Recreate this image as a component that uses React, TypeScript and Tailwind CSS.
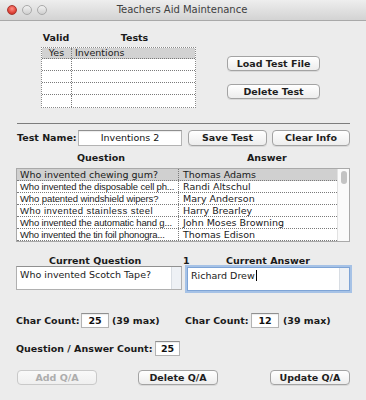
import React from "react";

const btn =
  "flex items-center justify-center rounded-[4px] border border-[#a3a3a3] bg-gradient-to-b from-[#ffffff] to-[#ededed] shadow-[0_1px_0_rgba(0,0,0,0.08)] text-[9.5px] font-bold text-[#1e1e1e] leading-none";
const btnDisabled =
  "flex items-center justify-center rounded-[4px] border border-[#c9c9c9] bg-gradient-to-b from-[#f9f9f9] to-[#efefef] text-[9.5px] font-bold text-[#adadad] leading-none";
const field =
  "flex items-center justify-center bg-white border border-[#b3b3b3] border-t-[#8f8f8f] shadow-[inset_0_1px_1px_rgba(0,0,0,0.08)] text-[9.5px] text-[#111] leading-none";

const questions: { q: string; a: string; cls: string }[] = [
  { q: "Who invented chewing gum?", a: "Thomas Adams", cls: "font-['DejaVu_Sans',sans-serif] text-[9.5px]" },
  { q: "Who invented the disposable cell ph...", a: "Randi Altschul", cls: "font-['Liberation_Sans',sans-serif] text-[9.5px] tracking-[-0.15px]" },
  { q: "Who patented windshield wipers?", a: "Mary Anderson", cls: "font-['Liberation_Sans',sans-serif] text-[9.5px] tracking-[-0.1px]" },
  { q: "Who invented stainless steel", a: "Harry Brearley", cls: "font-['Liberation_Sans',sans-serif] text-[9.5px] tracking-[0.45px]" },
  { q: "Who invented the automatic hand g...", a: "John Moses Browning", cls: "font-['Liberation_Sans',sans-serif] text-[9.5px] tracking-[-0.15px]" },
  { q: "Who invented the tin foil phonogra...", a: "Thomas Edison", cls: "font-['Liberation_Sans',sans-serif] text-[9.5px] tracking-[-0.2px]" },
];

export default function App() {
  return (
    <div className="w-[366px] h-[400px] overflow-hidden bg-[#ececec] font-['DejaVu_Sans',sans-serif] text-[#1a1a1a]">
      {/* Title bar */}
      <div className="relative h-[21px] flex items-center bg-gradient-to-b from-[#eeeeee] to-[#d3d3d3] border-b border-[#a9a9a9]">
        <div className="flex items-center gap-[5px] pl-[7px]">
          <div className="w-[10px] h-[10px] rounded-full bg-[radial-gradient(circle_at_50%_35%,#ff8f86,#e0443a_60%,#b22a22)] border border-[#a8372f]" />
          <div className="w-[10px] h-[10px] rounded-full bg-gradient-to-b from-[#f2f2f2] to-[#cfcfcf] border border-[#a9a9a9]" />
          <div className="w-[10px] h-[10px] rounded-full bg-gradient-to-b from-[#f2f2f2] to-[#cfcfcf] border border-[#a9a9a9]" />
        </div>
        <div className="absolute inset-0 flex items-center justify-center text-[10px] text-[#404040] leading-none pr-[2px]">
          Teachers Aid Maintenance
        </div>
      </div>

      {/* Tests section */}
      <div className="mt-[11px] flex pl-[41px]">
        <div className="flex flex-col w-[155px]">
          <div className="flex h-[12px] items-center text-[9.5px] font-bold leading-none">
            <div className="w-[30px] text-center">Valid</div>
            <div className="flex-1 text-center pl-[2px]">Tests</div>
          </div>
          <div className="mt-[3px] border border-dotted border-[#8a8a8a] bg-white">
            <div className="flex h-[11px] bg-[#d2d2d2] border-b border-dotted border-[#7a7a7a] text-[9.5px] leading-none items-center">
              <div className="w-[30px] h-full flex items-center justify-center border-r border-dotted border-[#7a7a7a]">Yes</div>
              <div className="flex-1 pl-[3px]">Inventions</div>
            </div>
            {[0, 1, 2, 3].map((i) => (
              <div key={i} className={`flex h-[12px] ${i < 3 ? "border-b border-dotted border-[#7a7a7a]" : ""}`}>
                <div className="w-[30px] h-full border-r border-dotted border-[#7a7a7a]" />
                <div className="flex-1" />
              </div>
            ))}
          </div>
        </div>
        <div className="ml-[31px] flex flex-col pt-[24px] gap-[13px]">
          <div className={`${btn} w-[93px] h-[15px]`}>Load Test File</div>
          <div className={`${btn} w-[93px] h-[15px]`}>Delete Test</div>
        </div>
      </div>

      {/* Separator */}
      <div className="mt-[15px] ml-[17px] w-[333px] h-[1px] bg-[#7d7d7d]" />

      {/* Test name row */}
      <div className="mt-[6px] flex items-center h-[16px] pl-[17px]">
        <div className="w-[61px] text-[9.5px] font-bold leading-none">Test Name:</div>
        <div className={`${field} w-[104px] h-[16px]`}>Inventions 2</div>
        <div className={`${btn} ml-[6px] w-[79px] h-[16px]`}>Save Test</div>
        <div className={`${btn} ml-[5px] w-[78px] h-[16px]`}>Clear Info</div>
      </div>

      {/* Question / Answer headers */}
      <div className="mt-[6px] flex h-[12px] items-center text-[9.5px] font-bold leading-none">
        <div className="ml-[77px] w-[170px]">Question</div>
        <div>Answer</div>
      </div>

      {/* Q/A table */}
      <div className="mt-[4px] ml-[16px] w-[334px] h-[74px] flex border border-[#a9a9a9] bg-white">
        <div className="flex-1 flex flex-col">
          {questions.map((r, i) => (
            <div
              key={i}
              className={`flex h-[12px] items-center leading-none border-b border-dotted border-[#7a7a7a] ${i === 0 ? "bg-[#d0d0d0]" : ""}`}
            >
              <div className={`w-[162px] h-full flex items-center pl-[3px] overflow-hidden whitespace-nowrap border-r border-dotted border-[#7a7a7a] ${r.cls}`}>
                {r.q}
              </div>
              <div className="flex-1 pl-[4px] text-[9.5px] whitespace-nowrap">{r.a}</div>
            </div>
          ))}
        </div>
        <div className="w-[12px] border-l border-[#e2e2e2] bg-[#fafafa] flex justify-center pt-[2px]">
          <div className="w-[6px] h-[13px] rounded-full bg-[#c3c3c3]" />
        </div>
      </div>

      {/* Current labels */}
      <div className="mt-[13px] flex h-[11px] items-center text-[9.5px] font-bold leading-none">
        <div className="ml-[49px] w-[134px]">Current Question</div>
        <div className="w-[43px]">1</div>
        <div>Current Answer</div>
      </div>

      {/* Text areas */}
      <div className="flex h-[24px]">
        <div className="ml-[16px] w-[166px] h-[24px] flex bg-white border border-[#b0b0b0] border-t-[#909090]">
          <div className="flex-1 pl-[3px] pt-[3px] text-[9.5px] leading-none">Who invented Scotch Tape?</div>
          <div className="w-[10px] bg-[#eef1f5] border-l border-[#d8dde3]" />
        </div>
        <div className="ml-[5px] mt-[1px] w-[163px] h-[24px] flex bg-white border border-[#7ea4d6] shadow-[0_0_0_2px_rgba(110,160,225,0.55)]">
          <div className="flex-1 pl-[3px] pt-[3px] text-[9.5px] leading-none flex items-start">
            <span>Richard Drew</span>
            <span className="ml-[1px] w-[1px] h-[11px] -mt-[1px] bg-black" />
          </div>
          <div className="w-[10px] bg-[#eef1f5] border-l border-[#d8dde3]" />
        </div>
      </div>

      {/* Char counts */}
      <div className="mt-[23px] flex h-[15px] items-center text-[9.5px] font-bold leading-none">
        <div className="ml-[16px] w-[65px]">Char Count:</div>
        <div className={`${field} w-[28px] h-[15px] font-bold`}>25</div>
        <div className="ml-[3px] w-[73px]">(39 max)</div>
        <div className="w-[66px]">Char Count:</div>
        <div className={`${field} w-[28px] h-[15px] font-bold`}>12</div>
        <div className="ml-[4px]">(39 max)</div>
      </div>

      {/* Q/A count */}
      <div className="mt-[13px] flex h-[15px] items-center text-[9.5px] font-bold leading-none">
        <div className="ml-[16px] w-[139px]">Question / Answer Count:</div>
        <div className={`${field} w-[25px] h-[15px] font-bold`}>25</div>
      </div>

      {/* Bottom buttons */}
      <div className="mt-[14px] flex h-[15px] pl-[17px]">
        <div className={`${btnDisabled} w-[80px] h-[15px]`}>Add Q/A</div>
        <div className={`${btn} ml-[41px] w-[80px] h-[15px]`}>Delete Q/A</div>
        <div className={`${btn} ml-[52px] w-[80px] h-[15px]`}>Update Q/A</div>
      </div>
    </div>
  );
}
